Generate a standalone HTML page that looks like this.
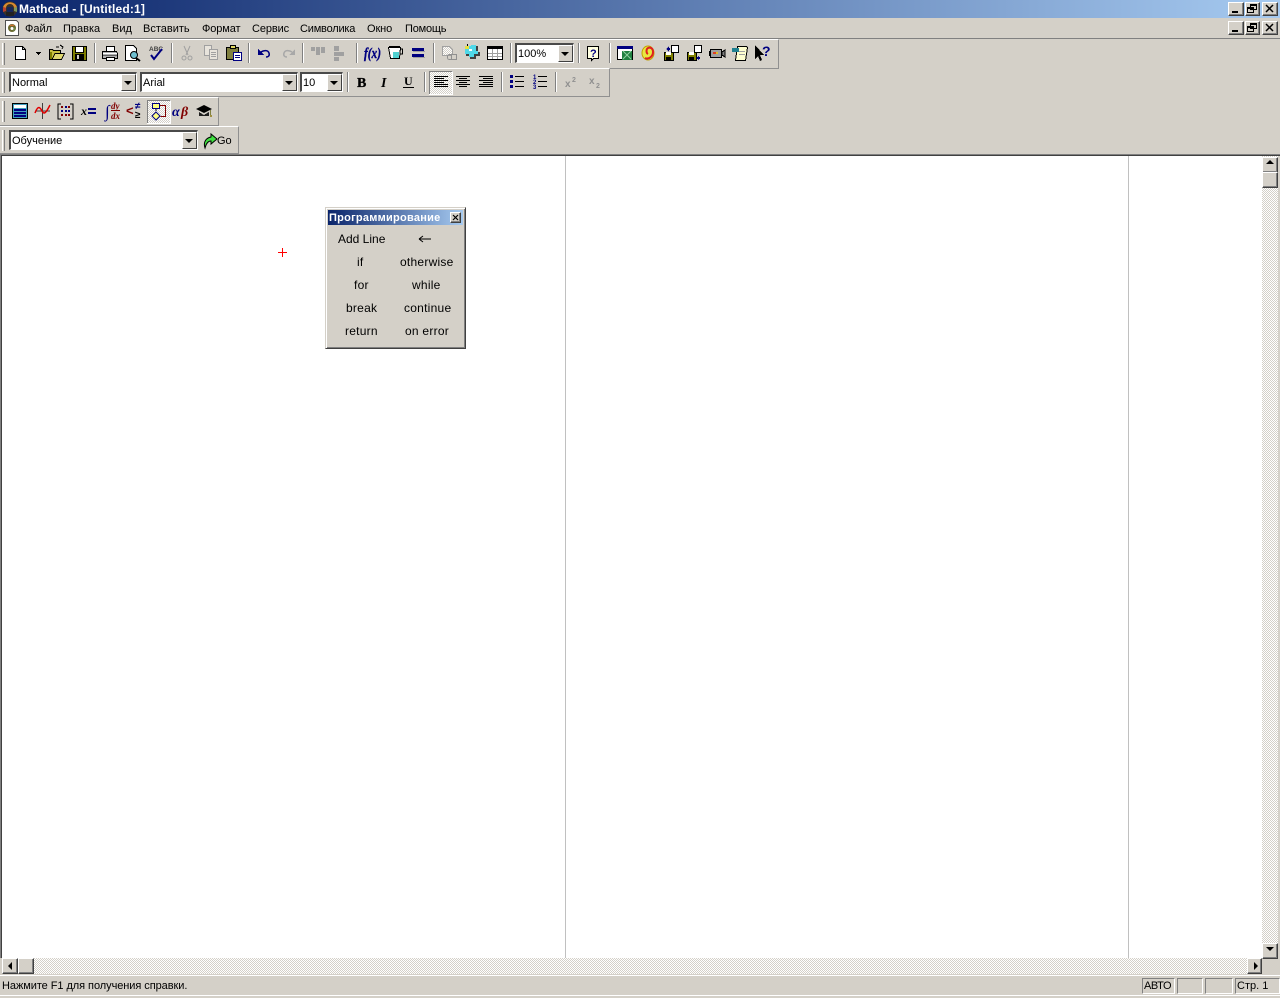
<!DOCTYPE html>
<html><head><meta charset="utf-8"><style>
html,body{margin:0;padding:0;width:1280px;height:998px;overflow:hidden;background:#d4d0c8}
body{position:relative;font:11px "Liberation Sans","Noto Sans CJK SC",sans-serif;color:#000}
.a{position:absolute}
.t{position:absolute;white-space:nowrap;line-height:14px;font-size:11px}
.tb{position:absolute;left:0;border-top:1px solid #fff;border-right:1px solid #909090;border-bottom:1px solid #909090;box-sizing:border-box}
.cmb{position:absolute;background:#fff;box-sizing:border-box;border:2px solid;border-color:#4a4a4a #fff #fff #4a4a4a;border-right-width:1px;border-bottom-width:1px}
.cmb span{position:absolute;left:1px;top:2px;line-height:14px;font-size:11px}
.ar{position:absolute;right:0;top:0;bottom:0;width:15px;background:#d4d0c8;box-sizing:border-box;border:1px solid;border-color:#fff #404040 #404040 #fff}
.ar:after{content:"";position:absolute;left:2px;top:6px;border:4px solid transparent;border-top:4px solid #000;border-bottom:0}
.btn{position:absolute;background:#d4d0c8;box-sizing:border-box;border:1px solid;border-color:#fff #404040 #404040 #fff;box-shadow:inset -1px -1px 0 #808080}
.pane{position:absolute;top:978px;height:16px;box-sizing:border-box;border:1px solid;border-color:#808080 #fff #fff #808080;line-height:14px;padding-left:1px}
.pi{position:absolute;white-space:nowrap;line-height:14px;font-size:12px;letter-spacing:.25px}
</style></head><body>
<div class="a" style="left:0;top:0;width:1280px;height:18px;background:linear-gradient(90deg,#0a246a,#a6caf0)"></div>
<div class="t" style="left:19px;top:2px;color:#fff;font-weight:bold;font-size:12px;letter-spacing:.15px">Mathcad - [Untitled:1]</div>
<div class="a" style="left:0;top:38px;width:1280px;height:1px;background:#808080"></div>
<div class="t" style="left:25px;top:22px">Файл</div>
<div class="t" style="left:63px;top:22px">Правка</div>
<div class="t" style="left:112px;top:22px">Вид</div>
<div class="t" style="left:143px;top:22px">Вставить</div>
<div class="t" style="left:202px;top:22px;letter-spacing:-.1px">Формат</div>
<div class="t" style="left:252px;top:22px;letter-spacing:-.1px">Сервис</div>
<div class="t" style="left:300px;top:22px;letter-spacing:-.2px">Символика</div>
<div class="t" style="left:367px;top:22px;letter-spacing:-.1px">Окно</div>
<div class="t" style="left:405px;top:22px;letter-spacing:-.2px">Помощь</div>

<div class="tb" style="top:39px;width:779px;height:30px"></div>
<div class="tb" style="top:68px;width:610px;height:29px"></div>
<div class="tb" style="top:97px;width:219px;height:29px"></div>
<div class="tb" style="top:126px;width:239px;height:28px"></div>

<div class="cmb" style="left:9px;top:72px;width:128px;height:20px"><span>Normal</span><div class="ar"></div></div>
<div class="cmb" style="left:140px;top:72px;width:158px;height:20px"><span>Arial</span><div class="ar"></div></div>
<div class="cmb" style="left:300px;top:72px;width:43px;height:20px"><span>10</span><div class="ar"></div></div>
<div class="cmb" style="left:515px;top:43px;width:59px;height:20px"><span>100%</span><div class="ar"></div></div>
<div class="cmb" style="left:9px;top:130px;width:189px;height:20px"><span>Обучение</span><div class="ar"></div></div>
<div class="t" style="left:217px;top:134px">Go</div>

<!-- document -->
<div class="a" style="left:0;top:154px;width:1262px;height:804px;background:#fff;box-sizing:border-box;border-left:1px solid #808080"></div>
<div class="a" style="left:0;top:154px;width:1280px;height:1px;background:#808080"></div>
<div class="a" style="left:1px;top:155px;width:1279px;height:1px;background:#404040"></div>
<div class="a" style="left:1px;top:155px;width:1px;height:803px;background:#404040"></div>
<div class="a" style="left:565px;top:156px;width:1px;height:802px;background:#c0c0c0"></div>
<div class="a" style="left:1128px;top:156px;width:1px;height:802px;background:#c0c0c0"></div>

<svg class="a" style="left:0;top:0" width="1280" height="998" shape-rendering="crispEdges" font-family="Liberation Sans, sans-serif">
<defs><pattern id="ck" width="2" height="2" patternUnits="userSpaceOnUse"><rect width="2" height="2" fill="#fff"/><rect width="1" height="1" fill="#d4d0c8"/><rect x="1" y="1" width="1" height="1" fill="#d4d0c8"/></pattern></defs>
<!-- scroll tracks -->
<rect x="1262" y="156" width="16" height="802" fill="url(#ck)"/>
<rect x="2" y="958" width="1260" height="16" fill="url(#ck)"/>
<!-- grips -->
<g fill="#fff"><rect x="2" y="43" width="1" height="22"/><rect x="2" y="72" width="1" height="21"/><rect x="2" y="101" width="1" height="21"/><rect x="2" y="130" width="1" height="21"/></g>
<g fill="#808080"><rect x="4" y="43" width="1" height="22"/><rect x="4" y="72" width="1" height="21"/><rect x="4" y="101" width="1" height="21"/><rect x="4" y="130" width="1" height="21"/></g>
<!-- separators -->
<g fill="#808080"><rect x="94" y="43" width="1" height="20"/><rect x="171" y="43" width="1" height="20"/><rect x="248" y="43" width="1" height="20"/><rect x="302" y="43" width="1" height="20"/><rect x="356" y="43" width="1" height="20"/><rect x="433" y="43" width="1" height="20"/><rect x="510" y="43" width="1" height="20"/><rect x="578" y="43" width="1" height="20"/><rect x="609" y="43" width="1" height="20"/><rect x="347" y="72" width="1" height="20"/><rect x="424" y="72" width="1" height="20"/><rect x="501" y="72" width="1" height="20"/><rect x="555" y="72" width="1" height="20"/></g>
<g fill="#fff"><rect x="95" y="43" width="1" height="20"/><rect x="172" y="43" width="1" height="20"/><rect x="249" y="43" width="1" height="20"/><rect x="303" y="43" width="1" height="20"/><rect x="357" y="43" width="1" height="20"/><rect x="434" y="43" width="1" height="20"/><rect x="511" y="43" width="1" height="20"/><rect x="579" y="43" width="1" height="20"/><rect x="610" y="43" width="1" height="20"/><rect x="348" y="72" width="1" height="20"/><rect x="425" y="72" width="1" height="20"/><rect x="502" y="72" width="1" height="20"/><rect x="556" y="72" width="1" height="20"/></g>

<!-- doc icon in menu -->
<g shape-rendering="auto"><path d="M5.500 20.500h11l2 2v13h-13z" fill="#fff" stroke="#505050"/><circle cx="12" cy="28" r="4" fill="#6a6a30"/><path d="M9 26a4 4 0 0 1 6 0z" fill="#d07030"/><path d="M15 27a4 4 0 0 1-2 4z" fill="#60a060"/><circle cx="12" cy="28.500" r="1.500" fill="#fff"/></g>
<!-- logo -->
<g shape-rendering="auto"><circle cx="10" cy="9" r="7.500" fill="#3a3228"/><path d="M3 7a7.500 7.500 0 0 1 14 0l-3 1a4 4 0 0 0-8 0z" fill="#d88a30"/><path d="M3 7l3 1v3l-3 1z" fill="#b84030"/><path d="M17 7l-3 1v3l3 1z" fill="#7a9860"/><path d="M6 12h8v4H6z" fill="#222"/><rect x="7" y="7" width="6" height="5" fill="#18285a"/></g>

<!-- New -->
<path d="M15.500 46.500h7l3 3v10h-10z" fill="#fff" stroke="#000"/><path d="M22.500 46.500v3h3" fill="none" stroke="#000"/>
<path d="M36 52h5v1h-1v1h-3v-1h-1zM38 54h1v1h-1z" fill="#000"/>
<!-- Open -->
<path d="M49.500 49.500h3l1 1h7v9h-11z" fill="#c8c040" stroke="#000"/><path d="M52 59.500l3-6h9.500l-3 6z" fill="#e0d870" stroke="#000"/><path d="M56 47h3M60 45l3 2-1 2" fill="none" stroke="#000"/><rect x="50" y="52" width="2" height="7" fill="#808000"/>
<!-- Save -->
<rect x="72.500" y="46.500" width="14" height="14" fill="#808000" stroke="#000"/><rect x="75.500" y="46.500" width="8" height="6" fill="#fff" stroke="#000"/><rect x="75" y="54" width="9" height="6" fill="#000"/><rect x="77" y="55" width="2" height="4" fill="#d4d0c8"/>
<!-- Print -->
<path d="M106.500 46.500h8v5h-8z" fill="#fff" stroke="#000"/><path d="M102.500 51.500h14l1 2v5h-15z" fill="#b0b0b0" stroke="#000"/><rect x="103" y="53" width="14" height="1" fill="#fff"/><rect x="103" y="55" width="14" height="1" fill="#606060"/><rect x="106.500" y="57.500" width="8" height="3" fill="#fff" stroke="#000"/>
<!-- Preview -->
<path d="M125.500 45.500h8l3 3v12h-11z" fill="#fff" stroke="#000"/><circle cx="134" cy="55" r="3.500" fill="#70c0d0" stroke="#000" shape-rendering="auto"/><path d="M136 58l4 3" stroke="#000" stroke-width="2" shape-rendering="auto"/>
<!-- Spell -->
<text x="149" y="51" font-size="6.500" font-weight="bold" fill="#404040">ABC</text>
<path d="M151 55l3 4 8-10" fill="none" stroke="#000080" stroke-width="2" shape-rendering="auto"/>
<!-- Cut disabled -->
<g fill="none" stroke="#a0a0a0" shape-rendering="auto"><path d="M184 46l4 9M190 46l-4 9"/><circle cx="184" cy="58" r="2"/><circle cx="190" cy="58" r="2"/></g>
<!-- Copy disabled -->
<path d="M204.500 45.500h7v10h-7z" fill="#e8e4dc" stroke="#a0a0a0"/><path d="M209.500 49.500h8v10h-8z" fill="#e8e4dc" stroke="#a0a0a0"/>
<g fill="#a0a0a0"><rect x="211" y="52" width="5" height="1"/><rect x="211" y="54" width="5" height="1"/><rect x="211" y="56" width="5" height="1"/></g>
<!-- Paste -->
<rect x="226.500" y="47.500" width="12" height="12" fill="#808040" stroke="#000"/><rect x="230.500" y="45.500" width="5" height="3" fill="#e0d860" stroke="#000"/><rect x="233.500" y="52.500" width="8" height="8" fill="#fff" stroke="#000080"/><g fill="#000080"><rect x="235" y="55" width="5" height="1"/><rect x="235" y="57" width="5" height="1"/></g>
<!-- Undo / Redo -->
<path d="M258 49v6h6z" fill="#000080"/><path d="M261 52c3-2 7-2 8 1s-1 4-3 4" fill="none" stroke="#000080" stroke-width="1.500" shape-rendering="auto"/>
<path d="M295 49v6h-6z" fill="#a8a8a8"/><path d="M292 52c-3-2-7-2-8 1s1 4 3 4" fill="none" stroke="#a8a8a8" stroke-width="1.500" shape-rendering="auto"/>
<!-- align disabled -->
<g fill="#a0a0a0"><rect x="311" y="47" width="4" height="4"/><rect x="316" y="47" width="4" height="8"/><rect x="321" y="47" width="4" height="6"/><rect x="334" y="46" width="5" height="5"/><rect x="334" y="52" width="10" height="4"/><rect x="334" y="57" width="5" height="4"/></g>
<!-- f(x) -->
<text x="364" y="58" font-family="Liberation Serif, serif" font-style="italic" font-weight="bold" font-size="15" fill="#000080" stroke="#000080" stroke-width=".4" textLength="17" lengthAdjust="spacingAndGlyphs" shape-rendering="auto">f(x)</text>
<!-- beaker -->
<path d="M388.500 47.500h12l-1 11h-9z" fill="#fff" stroke="#000"/><path d="M400 49h2.500v5h-3" fill="none" stroke="#000"/><rect x="393" y="52" width="6" height="6" fill="#50d0d0"/><rect x="389" y="46" width="11" height="2" fill="#000"/>
<!-- = -->
<rect x="412" y="48" width="12" height="3" fill="#000080"/><rect x="412" y="54" width="12" height="3" fill="#000080"/><rect x="413" y="51" width="12" height="1" fill="#a0a0a0"/><rect x="413" y="57" width="12" height="1" fill="#a0a0a0"/>
<!-- link disabled -->
<path d="M442.500 46.500h7l3 3v6h-10z" fill="url(#ck)" stroke="#a0a0a0"/><rect x="447.500" y="54.500" width="9" height="5" rx="2" fill="none" stroke="#909090"/><rect x="451.500" y="54.500" width="5" height="5" fill="#d4d0c8" stroke="#909090"/>
<!-- component -->
<path d="M466 47h6v-1h6v6h2v4h-4v3h-6v-3h-4z" fill="#404040"/><path d="M465 46h6v-1h5v6h2v3h-4v3h-5v-3h-4z" fill="#50d8e8"/><rect x="465" y="46" width="4" height="3" fill="#e8e040"/><rect x="469" y="49" width="3" height="2" fill="#fff"/><rect x="467" y="44" width="1" height="2" fill="#000"/>
<!-- table -->
<rect x="487.500" y="46.500" width="15" height="13" fill="#fff" stroke="#000"/><rect x="487" y="46" width="16" height="3" fill="#000"/><g fill="#a0a0a0"><rect x="488" y="53" width="14" height="1"/><rect x="488" y="56" width="14" height="1"/><rect x="492" y="49" width="1" height="10"/><rect x="497" y="49" width="1" height="10"/></g>
<!-- help -->
<path d="M587.500 46.500h11v12h-5l-2 2v-2h-4z" fill="#ffffe0" stroke="#000"/><text x="590" y="57" font-size="11" font-weight="bold" fill="#000080">?</text>
<!-- excel -->
<rect x="617.500" y="46.500" width="15" height="13" fill="#fff" stroke="#000"/><rect x="617" y="46" width="16" height="3" fill="#000080"/><path d="M622 51h10v9h-10z" fill="#208040"/><path d="M623 51l8 8M631 51l-8 8" stroke="#90d0a0" shape-rendering="auto"/>
<!-- ear -->
<ellipse cx="648" cy="53" rx="6" ry="7" fill="#e8e840" stroke="#c0a000" shape-rendering="auto"/><path d="M645 58c4 2 8-2 8-6s-3-5-5-4-2 5 0 6" fill="none" stroke="#e02020" stroke-width="2" shape-rendering="auto"/>
<!-- save-doc 1 -->
<rect x="664.500" y="52.500" width="9" height="8" fill="#808000" stroke="#000"/><rect x="666" y="52" width="5" height="3" fill="#fff"/><rect x="666" y="57" width="5" height="4" fill="#000"/><rect x="671.500" y="45.500" width="7" height="7" fill="#fff" stroke="#000"/><path d="M666 49l3-3v2h1v2h-1v2z" fill="#000080"/>
<!-- save-doc 2 -->
<rect x="687.500" y="52.500" width="9" height="8" fill="#808000" stroke="#000"/><rect x="689" y="52" width="5" height="3" fill="#fff"/><rect x="689" y="57" width="5" height="4" fill="#000"/><rect x="694.500" y="45.500" width="7" height="7" fill="#fff" stroke="#000"/><path d="M699 60l-3-2 3-2v1h1v2h-1z" fill="#000080"/>
<!-- camera -->
<rect x="710.500" y="49.500" width="11" height="8" fill="#a0a0a0" stroke="#000"/><rect x="713" y="52" width="3" height="2" fill="#e04020"/><rect x="716" y="52" width="2" height="2" fill="#e0c020"/><path d="M722 52l3-2v7l-3-2z" fill="#808080" stroke="#000"/><rect x="709" y="51" width="2" height="5" fill="#000"/>
<!-- tutorial -->
<path d="M737.500 46.500h9l1 1-2 13h-10z" fill="#ffffd0" stroke="#000"/><g fill="#a0a0a0"><rect x="739" y="51" width="6" height="1"/><rect x="739" y="54" width="6" height="1"/></g><rect x="732" y="48" width="7" height="4" fill="#208090"/>
<!-- help pointer -->
<path d="M755 45v14l3-3 2 5 2-1-2-5h4z" fill="#000"/><text x="762" y="56" font-size="14" font-weight="bold" fill="#000080">?</text>

<!-- format row -->
<text x="357" y="87" font-family="Liberation Serif, serif" font-weight="bold" font-size="14" stroke="#000" stroke-width=".3">B</text>
<text x="381" y="87" font-family="Liberation Serif, serif" font-style="italic" font-weight="bold" font-size="14">I</text>
<text x="404" y="85" font-family="Liberation Serif, serif" font-weight="bold" font-size="12">U</text><rect x="403" y="87" width="11" height="1" fill="#000"/>
<rect x="429" y="71" width="23" height="23" fill="url(#ck)"/><path d="M429.500 94V71.500h23" fill="none" stroke="#808080"/><path d="M452.500 71.500v23H429" fill="none" stroke="#fff"/>
<g fill="#000"><rect x="434" y="76" width="14" height="1"/><rect x="434" y="78" width="10" height="1"/><rect x="434" y="80" width="14" height="1"/><rect x="434" y="82" width="10" height="1"/><rect x="434" y="84" width="14" height="1"/><rect x="434" y="86" width="14" height="1"/>
<rect x="456" y="76" width="14" height="1"/><rect x="459" y="78" width="8" height="1"/><rect x="456" y="80" width="14" height="1"/><rect x="459" y="82" width="8" height="1"/><rect x="456" y="84" width="14" height="1"/><rect x="459" y="86" width="8" height="1"/>
<rect x="479" y="76" width="14" height="1"/><rect x="483" y="78" width="10" height="1"/><rect x="479" y="80" width="14" height="1"/><rect x="483" y="82" width="10" height="1"/><rect x="479" y="84" width="14" height="1"/><rect x="479" y="86" width="14" height="1"/></g>
<g fill="#000080"><rect x="510" y="75" width="3" height="3"/><rect x="510" y="80" width="3" height="3"/><rect x="510" y="85" width="3" height="3"/></g>
<g fill="#000"><rect x="515" y="76" width="9" height="1"/><rect x="515" y="81" width="9" height="1"/><rect x="515" y="86" width="9" height="1"/><rect x="538" y="76" width="9" height="1"/><rect x="538" y="81" width="9" height="1"/><rect x="538" y="86" width="9" height="1"/></g>
<g fill="#000080" font-size="6" font-weight="bold"><text x="533" y="79">1</text><text x="533" y="84">2</text><text x="533" y="89">3</text></g>
<g fill="#909090" font-weight="bold"><text x="565" y="87" font-size="10">x</text><text x="572" y="82" font-size="7">2</text><text x="589" y="84" font-size="10">x</text><text x="596" y="88" font-size="7">2</text></g>

<!-- row 3 -->
<rect x="12.500" y="103.500" width="15" height="15" fill="#40a0c0" stroke="#000"/><rect x="14" y="105" width="12" height="3" fill="#fff"/><g fill="#000080"><rect x="14" y="109" width="12" height="2"/><rect x="14" y="112" width="12" height="2"/><rect x="14" y="115" width="12" height="2"/></g>
<path d="M42.500 103v16M36 111h14" stroke="#404040" fill="none"/><path d="M35 113c3-8 5-6 7-2s4 2 8-6" fill="none" stroke="#e00000" stroke-width="1.500" shape-rendering="auto"/>
<path d="M61 104h-3v15h3M70 104h3v15h-3" fill="none" stroke="#000"/>
<g fill="#800000"><rect x="61" y="106" width="2" height="2"/><rect x="68" y="106" width="2" height="2"/><rect x="61" y="114" width="2" height="2"/><rect x="65" y="114" width="2" height="2"/><rect x="68" y="114" width="2" height="2"/></g>
<g fill="#000080"><rect x="65" y="106" width="2" height="2"/><rect x="61" y="110" width="2" height="2"/><rect x="65" y="110" width="2" height="2"/><rect x="68" y="110" width="2" height="2"/></g>
<text x="81" y="115" font-family="Liberation Serif, serif" font-style="italic" font-weight="bold" font-size="12" fill="#000">x</text><rect x="88" y="108" width="8" height="2" fill="#000080"/><rect x="88" y="112" width="8" height="2" fill="#000080"/>
<text x="105" y="117" font-family="Liberation Serif, serif" font-size="17" fill="#000080">∫</text>
<g fill="#800000" font-family="Liberation Serif, serif" font-style="italic" font-weight="bold" font-size="9"><text x="111" y="109">dy</text><text x="111" y="119">dx</text></g><rect x="111" y="110" width="9" height="1" fill="#800000"/>
<text x="126" y="115" font-size="13" font-weight="bold" fill="#800000">&lt;</text><text x="135" y="109" font-size="10" font-weight="bold" fill="#000080">≠</text><text x="135" y="118" font-size="10" font-weight="bold" fill="#000">≥</text>
<rect x="147" y="100" width="23" height="23" fill="url(#ck)"/><path d="M147.500 123V100.500h23" fill="none" stroke="#808080"/><path d="M170.500 100.500v23H147" fill="none" stroke="#fff"/>
<rect x="152.500" y="103.500" width="7" height="5" fill="#ffff80" stroke="#000080"/><path d="M156 109v2" stroke="#000"/><path d="M156 112l4 4-4 4-4-4z" fill="#ffff80" stroke="#000080" shape-rendering="auto"/><path d="M160 105.500h5.500v11h-5" fill="none" stroke="#800000"/>
<text x="172" y="116" font-family="Liberation Serif, serif" font-style="italic" font-weight="bold" font-size="14" fill="#000080">α</text><text x="181" y="116" font-family="Liberation Serif, serif" font-style="italic" font-weight="bold" font-size="14" fill="#800000">β</text>
<path d="M196 109l8-4 8 4-8 4z" fill="#000"/><path d="M199 112v4h10v-4l-5 3z" fill="#202020"/><rect x="210" y="110" width="1" height="6" fill="#808040"/><rect x="210" y="115" width="2" height="2" fill="#a09040"/>

<!-- Go icon -->
<path d="M205 148c-2-6 1-10 6-11v-3l6 5-6 5v-3c-3 0-5 3-6 7z" fill="#40e040" stroke="#000" shape-rendering="auto"/>

<!-- red cross -->
<rect x="278" y="252" width="9" height="1" fill="#f00"/><rect x="282" y="248" width="1" height="9" fill="#f00"/>
</svg>

<!-- caption buttons -->
<div class="btn" style="left:1228px;top:2px;width:16px;height:14px"></div>
<div class="btn" style="left:1245px;top:2px;width:15px;height:14px"></div>
<div class="btn" style="left:1262px;top:2px;width:16px;height:14px"></div>
<div class="btn" style="left:1228px;top:21px;width:16px;height:14px"></div>
<div class="btn" style="left:1245px;top:21px;width:15px;height:14px"></div>
<div class="btn" style="left:1262px;top:21px;width:16px;height:14px"></div>
<!-- scroll buttons -->
<div class="btn" style="left:1262px;top:157px;width:16px;height:16px"></div>
<div class="btn" style="left:1262px;top:172px;width:16px;height:16px"></div>
<div class="btn" style="left:1262px;top:943px;width:16px;height:16px"></div>
<div class="btn" style="left:2px;top:958px;width:16px;height:16px"></div>
<div class="btn" style="left:18px;top:958px;width:16px;height:16px"></div>
<div class="btn" style="left:1247px;top:958px;width:15px;height:16px"></div>

<svg class="a" style="left:0;top:0" width="1280" height="998" shape-rendering="crispEdges">
<rect x="1232" y="11" width="6" height="2"/><rect x="1232" y="30" width="6" height="2"/>
<path d="M1250.500 4.500h6v5h-6zM1247.500 7.500h6v5h-6z" fill="#d4d0c8" stroke="#000"/><rect x="1250" y="4" width="7" height="2"/><rect x="1247" y="7" width="7" height="2"/>
<path d="M1250.500 23.500h6v5h-6zM1247.500 26.500h6v5h-6z" fill="#d4d0c8" stroke="#000"/><rect x="1250" y="23" width="7" height="2"/><rect x="1247" y="26" width="7" height="2"/>
<path d="M1266 5l7 7M1273 5l-7 7M1266 24l7 7M1273 24l-7 7" stroke="#000" stroke-width="1.500" fill="none" shape-rendering="auto"/>
<path d="M1254 962l4 4-4 4z" fill="#000" shape-rendering="auto"/>
<path d="M1270 160l-4 4h8z M1266 947h8l-4 4z M12 962l-4 4 4 4z" fill="#000" shape-rendering="auto"/>
</svg>

<!-- status bar -->
<div class="a" style="left:0;top:975px;width:1280px;height:1px;background:#fff"></div>
<div class="a" style="left:0;top:995px;width:1280px;height:1px;background:#fff"></div>
<div class="t" style="left:2px;top:979px;letter-spacing:-.06px">Нажмите F1 для получения справки.</div>
<div class="pane" style="left:1142px;width:33px;letter-spacing:-.4px">АВТО</div>
<div class="pane" style="left:1177px;width:26px"></div>
<div class="pane" style="left:1205px;width:28px"></div>
<div class="pane" style="left:1235px;width:45px">Стр. 1</div>

<!-- palette -->
<div class="a" style="left:325px;top:207px;width:141px;height:142px;background:#d4d0c8;box-sizing:border-box;border:1px solid;border-color:#d4d0c8 #404040 #404040 #d4d0c8;box-shadow:inset 1px 1px 0 #fff,inset -1px -1px 0 #808080"></div>
<div class="a" style="left:328px;top:210px;width:135px;height:15px;background:linear-gradient(90deg,#0a246a,#a6caf0)"></div>
<div class="t" style="left:329px;top:211px;color:#fff;font-weight:bold;letter-spacing:.25px">Программирование</div>
<div class="btn" style="left:450px;top:212px;width:11px;height:11px"></div>
<svg class="a" style="left:450px;top:212px" width="11" height="11"><path d="M3 3l5 5M8 3l-5 5" stroke="#000" stroke-width="1.200"/></svg>
<div class="pi" style="left:338px;top:232px;letter-spacing:0">Add Line</div>
<svg class="a" style="left:418px;top:234px" width="14" height="10"><path d="M1 5h12M1 5l4-3M1 5l4 3" fill="none" stroke="#000"/></svg>
<div class="pi" style="left:357px;top:255px">if</div>
<div class="pi" style="left:400px;top:255px">otherwise</div>
<div class="pi" style="left:354px;top:278px">for</div>
<div class="pi" style="left:412px;top:278px">while</div>
<div class="pi" style="left:346px;top:301px">break</div>
<div class="pi" style="left:404px;top:301px">continue</div>
<div class="pi" style="left:345px;top:324px">return</div>
<div class="pi" style="left:405px;top:324px">on error</div>
</body></html>
